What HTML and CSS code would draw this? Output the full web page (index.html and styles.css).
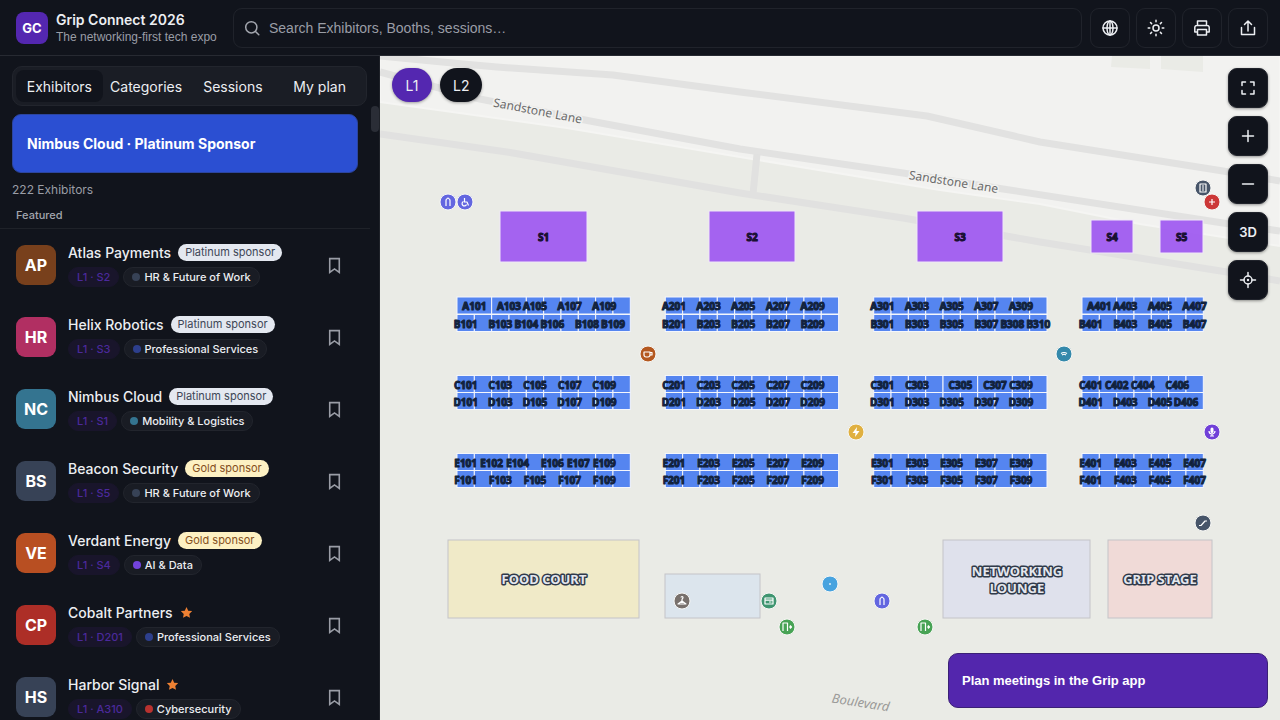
FILE: index.html
```html
<!DOCTYPE html>
<html lang="en">
<head>
<meta charset="utf-8">
<meta name="viewport" content="width=device-width, initial-scale=1">
<title>Grip Connect 2026</title>
<link rel="stylesheet" href="styles.css">
</head>
<body>
<svg class="sprite" aria-hidden="true">
  <symbol id="bookmark" viewBox="0 0 16 16"><path d="M3.500 1.500h9v13L8 11.200l-4.500 3.300z"/></symbol>
  <symbol id="star" viewBox="0 0 16 16"><path d="M8 1.200l2.100 4.500 4.900.6-3.600 3.400.9 4.900L8 12.200l-4.300 2.400.9-4.900L1 6.300l4.900-.6z"/></symbol>
</svg>

<header class="topbar">
  <div class="brand">
    <div class="brand-logo">GC</div>
    <div class="brand-text">
      <h1 class="brand-title">Grip Connect 2026</h1>
      <p class="brand-sub">The networking-first tech expo</p>
    </div>
  </div>
  <label class="search">
    <svg class="icon search-icon" viewBox="0 0 16 16"><circle cx="7.300" cy="7.300" r="5.600"/><path d="M11.500 11.500l3.300 3.300"/></svg>
    <input class="search-input" type="text" placeholder="Search Exhibitors, Booths, sessions…" aria-label="Search">
  </label>
  <div class="actions">
    <button class="action" aria-label="Language"><svg class="icon" viewBox="0 0 18 18"><circle cx="9" cy="9" r="7"/><ellipse cx="9" cy="9" rx="3" ry="7"/><path d="M2 9h14M9 2v14"/></svg></button>
    <button class="action" aria-label="Theme"><svg class="icon" viewBox="0 0 18 18"><circle cx="9" cy="9" r="3"/><path d="M9 1.200v1.600M9 15.200v1.600M1.200 9h1.600M15.200 9h1.600M3.500 3.500l1.100 1.100M13.400 13.400l1.100 1.100M3.500 14.500l1.100-1.100M13.400 4.600l1.100-1.100"/></svg></button>
    <button class="action" aria-label="Print"><svg class="icon" viewBox="0 0 18 18"><path d="M4.500 6.500V2h9v4.500M4.500 13H1.800V8.500a2 2 0 0 1 2-2h10.400a2 2 0 0 1 2 2V13h-2.700M4.500 10.500h9V16h-9z"/></svg></button>
    <button class="action" aria-label="Share"><svg class="icon" viewBox="0 0 18 18"><path d="M9 12V2.500M5.500 5.500L9 2l3.500 3.500M2.500 8.500V15.500h13V8.500"/></svg></button>
  </div>
</header>

<div class="layout">
  <aside class="sidebar">
    <nav class="tabs">
      <button class="tab tab-active">Exhibitors</button>
      <button class="tab">Categories</button>
      <button class="tab">Sessions</button>
      <button class="tab">My plan</button>
    </nav>
    <div class="scroller">
      <a class="banner" href="#">Nimbus Cloud · Platinum Sponsor</a>
      <p class="count">222 Exhibitors</p>
      <h2 class="group">Featured</h2>
      <ul class="list">
        <li class="row">
          <div class="avatar avatar-brown">AP</div>
          <div class="info">
            <div class="line"><span class="name">Atlas Payments</span><span class="badge badge-platinum">Platinum sponsor</span></div>
            <div class="chips"><span class="chip chip-booth">L1 · S2</span><span class="chip"><i class="dot dot-slate"></i>HR &amp; Future of Work</span></div>
          </div>
          <button class="save" aria-label="Save Atlas Payments"><svg class="icon-save"><use href="#bookmark"/></svg></button>
        </li>
        <li class="row">
          <div class="avatar avatar-pink">HR</div>
          <div class="info">
            <div class="line"><span class="name">Helix Robotics</span><span class="badge badge-platinum">Platinum sponsor</span></div>
            <div class="chips"><span class="chip chip-booth">L1 · S3</span><span class="chip"><i class="dot dot-navy"></i>Professional Services</span></div>
          </div>
          <button class="save" aria-label="Save Helix Robotics"><svg class="icon-save"><use href="#bookmark"/></svg></button>
        </li>
        <li class="row">
          <div class="avatar avatar-teal">NC</div>
          <div class="info">
            <div class="line"><span class="name">Nimbus Cloud</span><span class="badge badge-platinum">Platinum sponsor</span></div>
            <div class="chips"><span class="chip chip-booth">L1 · S1</span><span class="chip"><i class="dot dot-teal"></i>Mobility &amp; Logistics</span></div>
          </div>
          <button class="save" aria-label="Save Nimbus Cloud"><svg class="icon-save"><use href="#bookmark"/></svg></button>
        </li>
        <li class="row">
          <div class="avatar avatar-slate">BS</div>
          <div class="info">
            <div class="line"><span class="name">Beacon Security</span><span class="badge badge-gold">Gold sponsor</span></div>
            <div class="chips"><span class="chip chip-booth">L1 · S5</span><span class="chip"><i class="dot dot-slate"></i>HR &amp; Future of Work</span></div>
          </div>
          <button class="save" aria-label="Save Beacon Security"><svg class="icon-save"><use href="#bookmark"/></svg></button>
        </li>
        <li class="row">
          <div class="avatar avatar-orange">VE</div>
          <div class="info">
            <div class="line"><span class="name">Verdant Energy</span><span class="badge badge-gold">Gold sponsor</span></div>
            <div class="chips"><span class="chip chip-booth">L1 · S4</span><span class="chip"><i class="dot dot-violet"></i>AI &amp; Data</span></div>
          </div>
          <button class="save" aria-label="Save Verdant Energy"><svg class="icon-save"><use href="#bookmark"/></svg></button>
        </li>
        <li class="row">
          <div class="avatar avatar-red">CP</div>
          <div class="info">
            <div class="line"><span class="name">Cobalt Partners</span><svg class="star"><use href="#star"/></svg></div>
            <div class="chips"><span class="chip chip-booth">L1 · D201</span><span class="chip"><i class="dot dot-navy"></i>Professional Services</span></div>
          </div>
          <button class="save" aria-label="Save Cobalt Partners"><svg class="icon-save"><use href="#bookmark"/></svg></button>
        </li>
        <li class="row">
          <div class="avatar avatar-slate">HS</div>
          <div class="info">
            <div class="line"><span class="name">Harbor Signal</span><svg class="star"><use href="#star"/></svg></div>
            <div class="chips"><span class="chip chip-booth">L1 · A310</span><span class="chip"><i class="dot dot-red"></i>Cybersecurity</span></div>
          </div>
          <button class="save" aria-label="Save Harbor Signal"><svg class="icon-save"><use href="#bookmark"/></svg></button>
        </li>
      </ul>
      <div class="thumb"></div>
    </div>
  </aside>

  <main class="map">
    <svg class="plan" viewBox="380 56 900 664" preserveAspectRatio="xMidYMid slice">
      <rect class="ground" x="380" y="56" width="900" height="664"/>
      <path class="land" d="M380 56H1280V246L1140 224 1040 204 940 190 740 157 567 128 380 102z"/>
      <path class="plot" d="M1112 56h38v13l-39-2zM1161 56h42v16l-42-3z"/>
      <g class="roads">
        <path d="M380 56L463 64 497 67 613 75 740 92 927 116 1040 142 1223 171 1280 181"/>
        <path d="M380 72L480 99 590 121 740 149 903 173 1003 189 1223 223 1280 231"/>
        <path class="minor" d="M380 134L507 152 740 193 903 218 1040 242 1227 272 1280 281M757 154L753 194"/>
      </g>
      <g class="street">
        <text class="street-halo" transform="translate(537 115) rotate(11)">Sandstone Lane</text>
        <text class="street-halo" transform="translate(953 186) rotate(9)">Sandstone Lane</text>
        <text class="street-minor" transform="translate(860 707) rotate(9)">Boulevard</text>
      </g>
      <g class="rooms">
        <rect x="448" y="540" width="191" height="78" fill="#f0eac8"/>
        <rect x="665" y="574" width="95" height="44" fill="#dce5ed"/>
        <rect x="943" y="540" width="147" height="78" fill="#dfe1ec"/>
        <rect x="1108" y="540" width="104" height="78" fill="#f0dad7"/>
        <text x="544" y="584">FOOD COURT</text>
        <text x="1017" y="576">NETWORKING</text>
        <text x="1017" y="593">LOUNGE</text>
        <text x="1160" y="584">GRIP STAGE</text>
      </g>
      <g id="booths"></g>
      <g class="pins">
        <g transform="translate(448 202)"><circle r="8" fill="#6366e0"/><path d="M-2 4V-1.500a2 2 0 0 1 4 0V4M0-4.500v1"/></g>
        <g transform="translate(465 202)"><circle r="8" fill="#6366e0"/><path d="M-.5-4v4h2.500l1.500 3.500M-1.500-.5a2.300 2.300 0 1 0 3 3"/></g>
        <g transform="translate(1203 188)"><circle r="8" fill="#475569"/><path d="M-3-4H3V4H-3zM-1-2H1M-1 0H1M-1 2H1"/></g>
        <g transform="translate(1212 202)"><circle r="8" fill="#cc3737"/><path d="M-3 0H3M0-3V3"/></g>
        <g transform="translate(648 354)"><circle r="8" fill="#b4581f"/><path d="M-4-2H2V1a2 2 0 0 1-2 2H-2a2 2 0 0 1-2-2zM2-1.500H4V1H2"/></g>
        <g transform="translate(1064 354)"><circle r="8" fill="#3489ab"/><path d="M-3-.5Q0-2.500 3-.5M-2 1Q0-.5 2 1"/></g>
        <g transform="translate(856 432)"><circle r="8" fill="#e0b040"/><path class="solid" d="M1-5L-3.500 1H-.5L-1 5 3.500-1H.5z"/></g>
        <g transform="translate(1212 432)"><circle r="8" fill="#7140d8"/><path d="M-3-1a3 3 0 0 0 6 0M0 2V4M-2 4H2"/><rect class="solid" x="-1.500" y="-4.500" width="3" height="5.500" rx="1.500"/></g>
        <g transform="translate(1203 523)"><circle r="8" fill="#475569"/><path d="M-4 2.500H-2L2-2H4"/></g>
        <g transform="translate(682 601)"><circle r="8" fill="#78706c"/><path d="M-1-3.500a1 1 0 1 1 1.500 1L0-1.500V0L4 3H-4L0 0M-1 1.500H1"/></g>
        <g transform="translate(769 601)"><circle r="8" fill="#3f9570"/><path d="M-4-3H4V3H-4zM-4-.8H4M0 1H2.500"/></g>
        <g transform="translate(830 584)"><circle r="8" fill="#48a3df"/><path d="M0-1V1"/></g>
        <g transform="translate(882 601)"><circle r="8" fill="#6366e0"/><path d="M-2 4V-1.500a2 2 0 0 1 4 0V4M0-4.500v1"/></g>
        <g transform="translate(787 627)"><circle r="8" fill="#48a355"/><path d="M-4 4V-4H.5V4M2 0H4.500M3-1.500L4.500 0 3 1.500"/></g>
        <g transform="translate(925 627)"><circle r="8" fill="#48a355"/><path d="M-4 4V-4H.5V4M2 0H4.500M3-1.500L4.500 0 3 1.500"/></g>
      </g>
    </svg>
    <div class="levels">
      <button class="level level-active">L1</button>
      <button class="level">L2</button>
    </div>
    <div class="controls">
      <button class="control" aria-label="Fullscreen"><svg class="icon" viewBox="0 0 18 18"><path d="M3 6.500V3h3.500M11.500 3H15v3.500M15 11.500V15h-3.500M6.500 15H3v-3.500"/></svg></button>
      <button class="control" aria-label="Zoom in"><svg class="icon" viewBox="0 0 18 18"><path d="M3.500 9h11M9 3.500v11"/></svg></button>
      <button class="control" aria-label="Zoom out"><svg class="icon" viewBox="0 0 18 18"><path d="M3.500 9h11"/></svg></button>
      <button class="control">3D</button>
      <button class="control" aria-label="Locate"><svg class="icon" viewBox="0 0 18 18"><circle cx="9" cy="9" r="4"/><circle class="center" cx="9" cy="9" r="1.200"/><path d="M9 1.500V5M9 13v3.500M1.500 9H5M13 9h3.500"/></svg></button>
    </div>
    <a class="cta" href="#">Plan meetings in the Grip app</a>
  </main>
</div>
<script src="map.js"></script>
</body>
</html>
```

FILE: styles.css
```css
* { box-sizing: border-box; }

body {
  margin: 0;
  height: 100vh;
  display: flex;
  flex-direction: column;
  overflow: hidden;
  background: #11141c;
  color: #eceef2;
  font-family: Inter, "Liberation Sans", sans-serif;
  font-size: 14px;
}

h1, h2, p, ul { margin: 0; padding: 0; }
button { font: inherit; color: inherit; padding: 0; cursor: pointer; }
a { text-decoration: none; }
.sprite { position: absolute; width: 0; height: 0; }

.icon {
  width: 18px;
  height: 18px;
  fill: none;
  stroke: currentColor;
  stroke-width: 1.5;
  stroke-linecap: round;
  stroke-linejoin: round;
}
.icon .center { fill: currentColor; stroke: none; }

/* Top bar */
.topbar {
  flex: none;
  height: 56px;
  display: flex;
  align-items: center;
  gap: 8px;
  padding: 0 12px 0 16px;
  border-bottom: 1px solid #272a32;
}
.brand { display: flex; align-items: center; gap: 8px; min-width: 209px; }
.brand-logo {
  width: 32px;
  height: 32px;
  display: grid;
  place-items: center;
  border-radius: 8px;
  background: #5427b0;
  color: #fff;
  font-size: 13px;
  font-weight: 700;
}
.brand-title { font-size: 14px; line-height: 18px; font-weight: 600; white-space: nowrap; }
.brand-sub {
  font-family: "Liberation Sans", sans-serif;
  font-size: 12px;
  line-height: 16px;
  color: #9a9da6;
  white-space: nowrap;
}
.search {
  flex: 1;
  height: 40px;
  display: flex;
  align-items: center;
  gap: 8px;
  padding: 0 10px;
  border: 1px solid #20232b;
  border-radius: 9px;
}
.search-icon { color: #a3a6ae; width: 16px; height: 16px; }
.search-input {
  flex: 1;
  padding: 0 1px;
  border: 0;
  outline: 0;
  background: none;
  color: inherit;
  font: 14px "Liberation Sans", sans-serif;
}
.search-input::placeholder { color: #9a9da6; opacity: 1; }
.actions { display: flex; gap: 6px; }
.action {
  width: 40px;
  height: 40px;
  display: grid;
  place-items: center;
  border: 1px solid #20232b;
  border-radius: 9px;
  background: none;
}

/* Sidebar */
.layout { flex: 1; min-height: 0; display: flex; }
.sidebar {
  flex: none;
  width: 380px;
  display: flex;
  flex-direction: column;
  border-right: 1px solid #1f2229;
}
.tabs {
  display: grid;
  grid-template-columns: repeat(4, 1fr);
  margin: 10px 12px 0;
  padding: 3px;
  border: 1px solid #22252d;
  border-radius: 10px;
  background: #1a1d25;
}
.tab { height: 32px; border: 0; border-radius: 8px; background: none; }
.tab-active { background: #11141c; }
.scroller { position: relative; flex: 1; min-height: 0; overflow: hidden; padding-right: 9px; }
.thumb {
  position: absolute;
  top: 0;
  right: 0;
  width: 8px;
  height: 26px;
  border-radius: 4px;
  background: #2a2d36;
}
.banner {
  display: flex;
  align-items: center;
  height: 59px;
  margin: 8px 12px 0;
  padding: 0 14px;
  border: 1px solid #2c459f;
  border-radius: 9px;
  background: #2b4fd2;
  color: #fff;
  font-weight: 700;
}
.count { padding: 9px 12px 0; font-size: 12px; line-height: 16px; color: #9a9da6; }
.group {
  padding: 9px 16px 5px;
  border-bottom: 1px solid #1f2229;
  font-size: 11px;
  line-height: 16px;
  font-weight: 500;
  color: #a3a6ae;
}
.list { list-style: none; }
.row { display: flex; align-items: center; gap: 12px; height: 72px; padding: 0 24px 0 16px; }
.avatar {
  flex: none;
  width: 40px;
  height: 40px;
  display: grid;
  place-items: center;
  border-radius: 9px;
  color: #fff;
  font-size: 16px;
  font-weight: 700;
}
.avatar-brown { background: #78401c; }
.avatar-pink { background: #b12f62; }
.avatar-teal { background: #347490; }
.avatar-slate { background: #374256; }
.avatar-orange { background: #b84f22; }
.avatar-red { background: #ad2e27; }
.info { flex: 1; min-width: 0; }
.line { display: flex; align-items: center; gap: 7px; height: 18px; }
.name { font-weight: 500; white-space: nowrap; }
.badge {
  height: 17px;
  padding: 0 7px;
  border-radius: 9px;
  font-size: 11px;
  line-height: 17px;
  white-space: nowrap;
}
.badge-platinum { background: #e4e8f0; color: #3d4656; }
.badge-gold { background: #fdf1c3; color: #85501d; }
.star { width: 13px; height: 13px; fill: #ee8133; }
.chips { display: flex; gap: 4px; margin-top: 5px; }
.chip {
  display: flex;
  align-items: center;
  gap: 4px;
  height: 20px;
  padding: 0 8px;
  border: 1px solid #22252d;
  border-radius: 10px;
  background: #191c24;
  font-size: 11px;
  font-weight: 500;
  white-space: nowrap;
}
.chip-booth { border-color: #19152b; background: #19152b; color: #4b299b; }
.dot { width: 8px; height: 8px; border-radius: 50%; }
.dot-slate { background: #374256; }
.dot-navy { background: #2d3f8c; }
.dot-teal { background: #347490; }
.dot-violet { background: #7343dc; }
.dot-red { background: #b8322f; }
.save { width: 24px; height: 24px; display: grid; place-items: center; border: 0; background: none; }
.icon-save { width: 17px; height: 17px; fill: none; stroke: #9a9da6; stroke-width: 1.5; }

/* Map */
.map { position: relative; flex: 1; min-width: 0; overflow: hidden; }
.plan { display: block; width: 100%; height: 100%; }
.ground { fill: #eaebe6; }
.land { fill: #f2f2f0; stroke: #f5f5f3; stroke-width: 2; }
.plot { fill: #eaebe6; }
.roads { fill: none; stroke: #e2e2e1; stroke-width: 7; stroke-linejoin: round; }
.roads .minor { stroke: #e1e1e0; }
.street { font: 12px "Noto Sans", sans-serif; text-anchor: middle; fill: #6b6b6b; }
.street-halo { stroke: #f2f2f0; stroke-width: 3; paint-order: stroke; }
.street-minor { fill: #9a9a98; font-style: italic; font-size: 13px; }
.rooms rect { stroke: #c4c4c8; stroke-width: 1; }
.rooms text {
  font: 700 13px "Noto Sans", sans-serif;
  text-anchor: middle;
  fill: #e4e7ee;
  stroke: #303a4a;
  stroke-width: 3;
  stroke-linejoin: round;
  paint-order: stroke;
}
.booth { fill: #5585f0; stroke: #f4f6fc; stroke-width: 1; }
.booth-sponsor { fill: #a05cf0; fill-opacity: 0.95; stroke: #f0e8f8; }
.booth-label {
  font: 700 10px "Open Sans", "Noto Sans", sans-serif;
  text-anchor: middle;
  fill: #13233f;
  stroke: #0c1a33;
  stroke-width: 1;
  stroke-linejoin: round;
  paint-order: stroke;
}
.booth-label-sponsor { fill: #1b1034; stroke: #130c28; }
.pins circle { stroke: #f8f8f6; stroke-width: 1; }
.pins path { fill: none; stroke: #fff; stroke-width: 1.2; stroke-linejoin: round; }
.pins .solid { fill: #fff; stroke: none; }

.levels { position: absolute; top: 12px; left: 12px; display: flex; gap: 8px; }
.level {
  min-width: 40px;
  height: 34px;
  padding: 0 13px;
  border: 0;
  border-radius: 17px;
  background: #11141c;
  box-shadow: 0 1px 3px rgba(0, 0, 0, 0.35);
}
.level-active { background: #5427b0; }
.controls { position: absolute; top: 12px; right: 12px; display: grid; gap: 8px; }
.control {
  width: 40px;
  height: 40px;
  display: grid;
  place-items: center;
  border: 1px solid #20232b;
  border-radius: 9px;
  background: #11141c;
  box-shadow: 0 1px 3px rgba(0, 0, 0, 0.4);
  font-size: 13px;
  font-weight: 600;
}
.cta {
  position: absolute;
  right: 12px;
  bottom: 12px;
  width: 320px;
  height: 55px;
  display: flex;
  align-items: center;
  padding: 0 13px;
  border: 1px solid #3b2076;
  border-radius: 10px;
  background: #5326ad;
  color: #fff;
  font: 700 13px "Liberation Sans", sans-serif;
}
```

FILE: map.js
```js
const NS = "http://www.w3.org/2000/svg";
const layer = document.getElementById("booths");
const CELL = 17.33;
const blocks = [457, 665.3, 873.7, 1082];
const rows = { A: 297, B: 314.5, C: 375.5, D: 392.5, E: 453.5, F: 470.5 };

// Each entry is a booth: [number in block, width in cells]; 0 hides the label.
const ten = [[1, 1], [0, 1], [3, 1], [0, 1], [5, 1], [0, 1], [7, 1], [0, 1], [9, 1], [0, 1]];
const seven = ten.slice(0, 7);
const special = {
  A1: [[1, 2], [3, 2], [5, 1], [0, 1], [7, 1], [0, 1], [9, 1], [0, 1]],
  B1: [[1, 1], [0, 1], [3, 1], [4, 2], [6, 1], [0, 1], [8, 1], [9, 2]],
  E1: [[1, 1], [2, 2], [4, 1], [0, 1], [6, 1], [7, 2], [9, 1], [0, 1]],
  B3: [[1, 1], [0, 1], [3, 1], [0, 1], [5, 1], [0, 1], [7, 1], [8, 2], [10, 1]],
  C3: [[1, 1], [0, 1], [3, 1], [0, 1], [5, 2], [7, 2], [9, 1], [0, 1]],
  A4: [[1, 2], [3, 1], [0, 1], [5, 1], [0, 1], [7, 1]],
  C4: [[1, 1], [2, 2], [4, 1], [0, 1], [6, 1], [0, 1]],
  D4: [[1, 1], [0, 1], [3, 1], [0, 1], [5, 1], [6, 2]]
};

function add(tag, attrs, text) {
  const el = document.createElementNS(NS, tag);
  for (const key in attrs) el.setAttribute(key, attrs[key]);
  if (text) el.textContent = text;
  layer.appendChild(el);
}

const labels = [];
for (const row in rows) {
  blocks.forEach((start, i) => {
    let x = start;
    for (const [n, span] of special[row + (i + 1)] || (i === 3 ? seven : ten)) {
      const width = span * CELL;
      add("rect", { class: "booth", x, y: rows[row], width, height: 17 });
      if (n) labels.push([x + width / 2, rows[row] + 13, row + ((i + 1) * 100 + n), "booth-label"]);
      x += width;
    }
  });
}

[[500, 211, 87, 51], [709, 211, 86, 51], [917, 211, 86, 51], [1091, 220, 42, 33], [1160, 220, 43, 33]]
  .forEach(([x, y, width, height], i) => {
    add("rect", { class: "booth booth-sponsor", x, y, width, height });
    labels.push([x + width / 2, y + height / 2 + 4, "S" + (i + 1), "booth-label booth-label-sponsor"]);
  });

labels.forEach(([x, y, text, cls]) => add("text", { class: cls, x, y }, text));
```
